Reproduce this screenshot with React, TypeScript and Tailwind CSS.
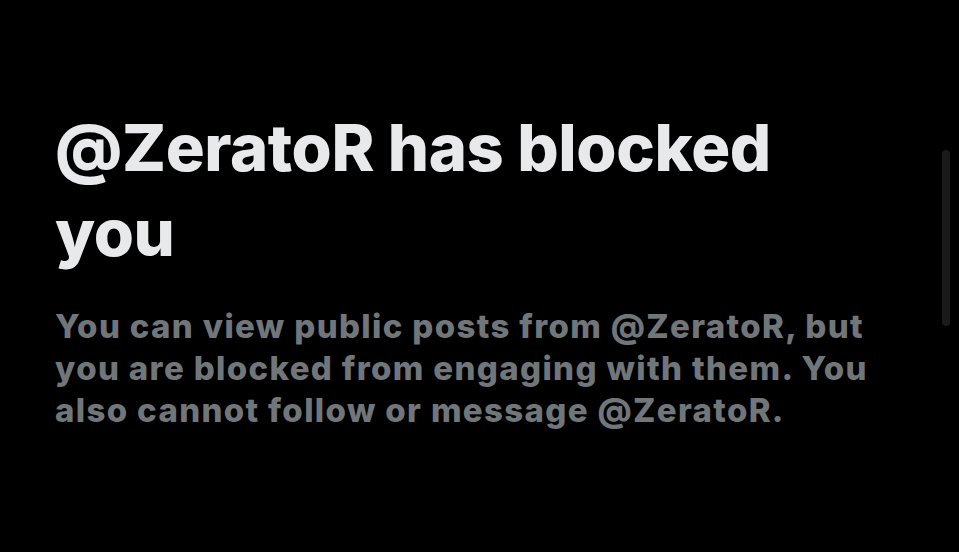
export default function App() {
  return (
    <div className="relative h-[552px] w-[959px] overflow-hidden bg-black font-['Inter',sans-serif]">
      <div className="w-[890px] pl-[55px] pt-[105px]">
        <h1 className="text-[65px] font-extrabold leading-[85px] tracking-[-0.4px] text-[#e7e9ea]">
          @ZeratoR has blocked you
        </h1>
        <p className="mt-[30px] text-[33px] font-extrabold leading-[42px] tracking-[1.35px] text-[#71767b]">
          You can view public posts from @ZeratoR, but you are blocked from engaging with them. You also cannot follow or message @ZeratoR.
        </p>
      </div>
      <div className="absolute left-[942px] top-[150px] h-[176px] w-[8px] rounded-full bg-[#1a1a1a]" />
    </div>
  );
}
